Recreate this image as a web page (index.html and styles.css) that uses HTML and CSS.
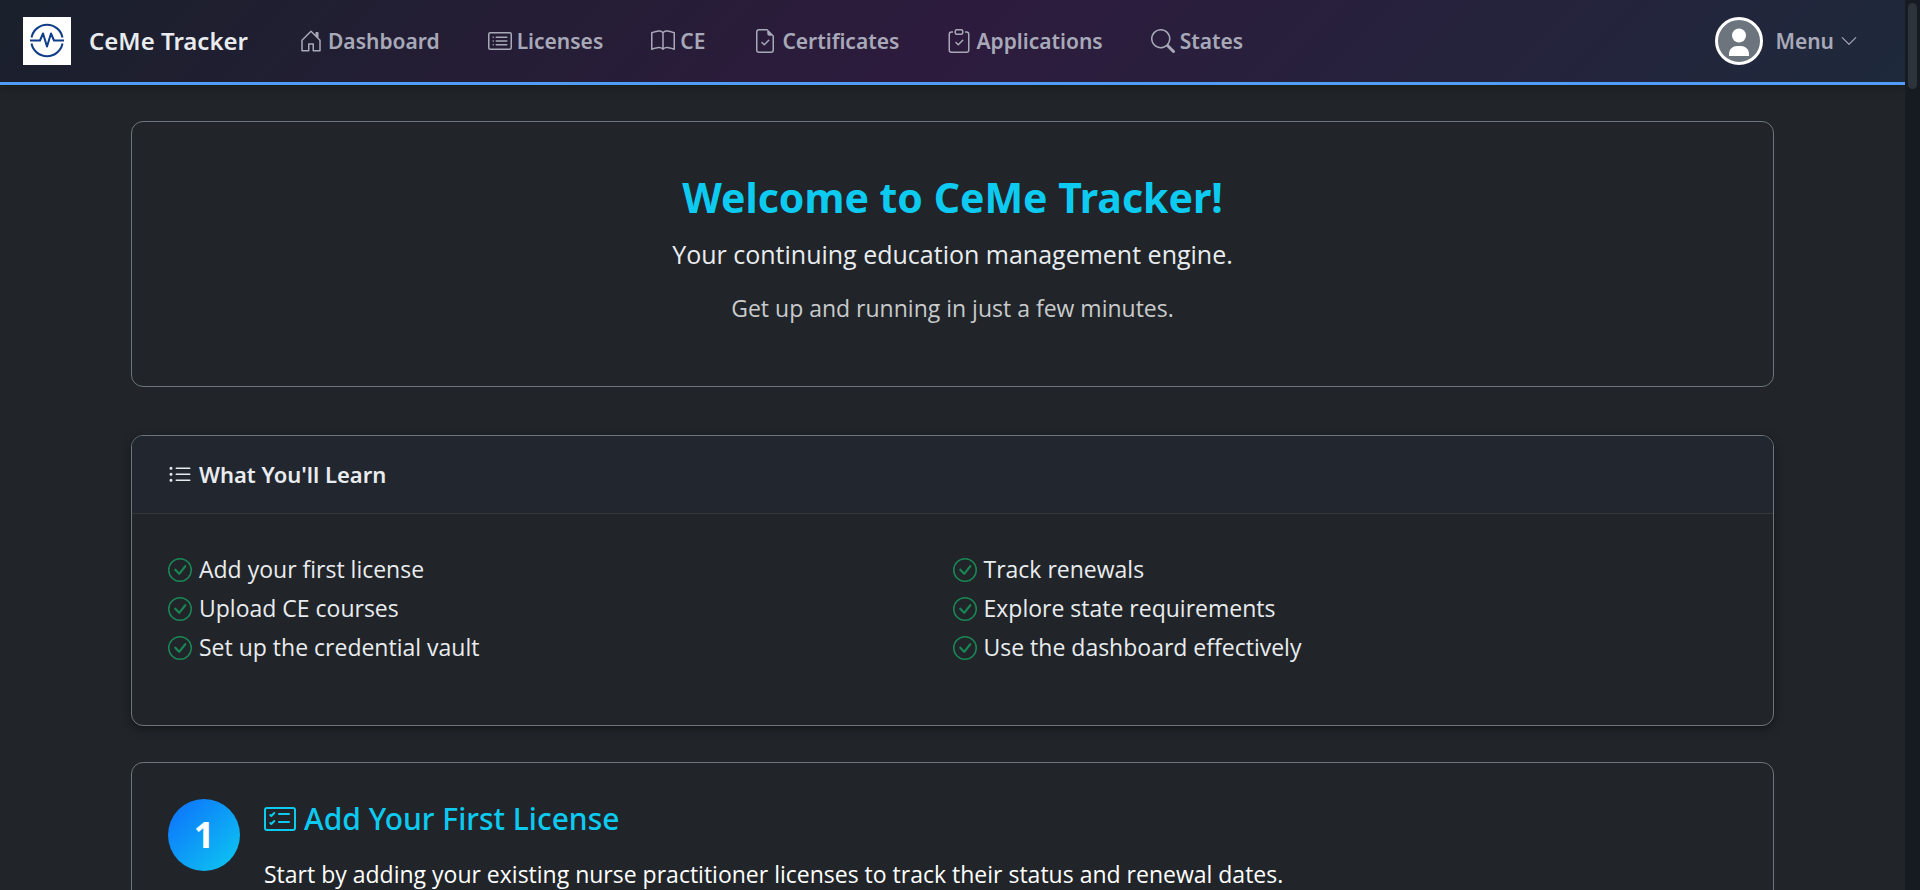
FILE: index.html
```html
<!DOCTYPE html>
<html lang="en">
<head>
    <meta charset="UTF-8">
    <meta name="viewport" content="width=device-width, initial-scale=1.0">
    <title>CeMe Tracker</title>
    <link rel="stylesheet" href="styles.css">
</head>
<body>
    <!-- Shared icons -->
    <svg class="icon-defs" aria-hidden="true">
        <symbol id="check-circle" viewBox="0 0 16 16">
            <path d="M8 15A7 7 0 1 1 8 1a7 7 0 0 1 0 14m0 1A8 8 0 1 0 8 0a8 8 0 0 0 0 16"/>
            <path d="m10.97 4.97-.02.022-3.473 4.425-2.093-2.094a.75.75 0 0 0-1.06 1.06L6.97 11.03a.75.75 0 0 0 1.079-.02l3.992-4.99a.75.75 0 0 0-1.071-1.05"/>
        </symbol>
    </svg>

    <div class="page">
        <header class="navbar">
            <a class="brand" href="#">
                <svg class="brand-logo" viewBox="0 0 48 48" aria-hidden="true">
                    <rect width="48" height="48" fill="#fff"/>
                    <g fill="none" stroke="#0f3d87" stroke-width="2">
                        <path d="M8.500 20.500a15.800 15.800 0 0 1 31 0M8.500 26.500a15.800 15.800 0 0 0 31 0"/>
                        <path d="M7 23.500h10l3-7 4 13 4-13 3 7h10" stroke-linejoin="round"/>
                    </g>
                </svg>
                <span>CeMe Tracker</span>
            </a>
            <nav class="nav-links">
                <a class="nav-link" href="#">
                    <svg class="icon" viewBox="0 0 16 16"><path d="M8.354 1.146a.5.5 0 0 0-.708 0l-6 6A.5.5 0 0 0 1.5 7.5v7a.5.5 0 0 0 .5.5h4.500a.5.5 0 0 0 .5-.5v-4h2v4a.5.5 0 0 0 .5.5H14a.5.5 0 0 0 .5-.5v-7a.5.5 0 0 0-.146-.354L13 5.793V2.500a.5.5 0 0 0-.5-.5h-1a.5.5 0 0 0-.5.5v1.293zM2.500 14V7.707l5.500-5.500 5.500 5.500V14H10v-4a.5.5 0 0 0-.5-.5h-3a.5.5 0 0 0-.5.5v4z"/></svg>
                    <span>Dashboard</span>
                </a>
                <a class="nav-link" href="#">
                    <svg class="icon" viewBox="0 0 16 16"><path d="M14.5 3a.5.5 0 0 1 .5.5v9a.5.5 0 0 1-.5.5h-13a.5.5 0 0 1-.5-.5v-9a.5.5 0 0 1 .5-.5zm-13-1A1.5 1.5 0 0 0 0 3.500v9A1.500 1.500 0 0 0 1.500 14h13a1.500 1.500 0 0 0 1.500-1.500v-9A1.500 1.500 0 0 0 14.500 2z"/><path d="M5 8a.5.5 0 0 1 .5-.5h7a.5.5 0 0 1 0 1h-7A.5.5 0 0 1 5 8m0-2.500a.5.5 0 0 1 .5-.5h7a.5.5 0 0 1 0 1h-7a.5.5 0 0 1-.5-.5m0 5a.5.5 0 0 1 .5-.5h7a.5.5 0 0 1 0 1h-7a.5.5 0 0 1-.5-.5m-1-5a.5.5 0 1 1-1 0 .5.5 0 0 1 1 0M4 8a.5.5 0 1 1-1 0 .5.5 0 0 1 1 0m0 2.500a.5.5 0 1 1-1 0 .5.5 0 0 1 1 0"/></svg>
                    <span>Licenses</span>
                </a>
                <a class="nav-link" href="#">
                    <svg class="icon" viewBox="0 0 16 16"><path d="M1 2.828c.885-.37 2.154-.769 3.388-.893 1.330-.134 2.458.063 3.112.752v9.746c-.935-.53-2.120-.603-3.213-.493-1.180.12-2.370.461-3.287.811zm7.500-.141c.654-.689 1.782-.886 3.112-.752 1.234.124 2.503.523 3.388.893v9.923c-.918-.35-2.107-.692-3.287-.81-1.094-.111-2.278-.039-3.213.492zM8 1.783C7.015.936 5.587.81 4.287.94c-1.514.153-3.042.672-3.994 1.105A.5.5 0 0 0 0 2.500v11a.5.5 0 0 0 .707.455c.882-.4 2.303-.881 3.680-1.020 1.409-.142 2.590.087 3.223.877a.5.5 0 0 0 .78 0c.633-.79 1.814-1.019 3.222-.877 1.378.139 2.800.62 3.681 1.020A.5.5 0 0 0 16 13.500v-11a.5.5 0 0 0-.293-.455c-.952-.433-2.480-.952-3.994-1.105C10.413.809 8.985.936 8 1.783"/></svg>
                    <span>CE</span>
                </a>
                <a class="nav-link" href="#">
                    <svg class="icon" viewBox="0 0 16 16"><path d="M10.854 7.854a.5.5 0 0 0-.708-.708L7.500 9.793 6.354 8.646a.5.5 0 1 0-.708.708l1.500 1.500a.5.5 0 0 0 .708 0z"/><path d="M14 14V4.500L9.500 0H4a2 2 0 0 0-2 2v12a2 2 0 0 0 2 2h8a2 2 0 0 0 2-2M9.500 3A1.500 1.500 0 0 0 11 4.500h2V14a1 1 0 0 1-1 1H4a1 1 0 0 1-1-1V2a1 1 0 0 1 1-1h5.500z"/></svg>
                    <span>Certificates</span>
                </a>
                <a class="nav-link" href="#">
                    <svg class="icon" viewBox="0 0 16 16"><path d="M10.854 7.146a.5.5 0 0 1 0 .708l-3 3a.5.5 0 0 1-.708 0l-1.500-1.500a.5.5 0 1 1 .708-.708L7.500 9.793l2.646-2.647a.5.5 0 0 1 .708 0"/><path d="M4 1.500H3a2 2 0 0 0-2 2V14a2 2 0 0 0 2 2h10a2 2 0 0 0 2-2V3.500a2 2 0 0 0-2-2h-1v1h1a1 1 0 0 1 1 1V14a1 1 0 0 1-1 1H3a1 1 0 0 1-1-1V3.500a1 1 0 0 1 1-1h1z"/><path d="M9.500 1a.5.5 0 0 1 .5.5v1a.5.5 0 0 1-.5.5h-3a.5.5 0 0 1-.5-.5v-1a.5.5 0 0 1 .5-.5zm-3-1A1.500 1.500 0 0 0 5 1.500v1A1.500 1.500 0 0 0 6.500 4h3A1.500 1.500 0 0 0 11 2.500v-1A1.500 1.500 0 0 0 9.500 0z"/></svg>
                    <span>Applications</span>
                </a>
                <a class="nav-link" href="#">
                    <svg class="icon" viewBox="0 0 16 16"><path d="M11.742 10.344a6.500 6.500 0 1 0-1.397 1.398h-.001q.044.06.098.115l3.850 3.850a1 1 0 0 0 1.415-1.414l-3.850-3.850a1 1 0 0 0-.115-.1zM12 6.500a5.500 5.500 0 1 1-11 0 5.500 5.500 0 0 1 11 0"/></svg>
                    <span>States</span>
                </a>
            </nav>
            <button class="menu-button" type="button">
                <svg class="avatar" viewBox="0 0 48 48" aria-hidden="true">
                    <circle cx="24" cy="24" r="22.500" fill="#6c757d" stroke="#fff" stroke-width="3"/>
                    <circle cx="24" cy="18.500" r="7" fill="#fff"/>
                    <path d="M14 39v-2c0-5 4-8 8-8h4c4 0 8 3 8 8v2z" fill="#fff"/>
                </svg>
                <span>Menu</span>
                <svg class="chevron" viewBox="0 0 16 16" aria-hidden="true"><path d="M1.646 4.646a.5.5 0 0 1 .708 0L8 10.293l5.646-5.647a.5.5 0 0 1 .708.708l-6 6a.5.5 0 0 1-.708 0l-6-6a.5.5 0 0 1 0-.708"/></svg>
            </button>
        </header>

        <main class="container">
            <section class="card welcome">
                <h1>Welcome to CeMe Tracker!</h1>
                <p class="lead">Your continuing education management engine.</p>
                <p class="hint">Get up and running in just a few minutes.</p>
            </section>

            <section class="card learn">
                <h2 class="card-header">
                    <svg class="icon" viewBox="0 0 16 16"><path d="M5 11.500a.5.5 0 0 1 .5-.5h9a.5.5 0 0 1 0 1h-9a.5.5 0 0 1-.5-.5m0-4a.5.5 0 0 1 .5-.5h9a.5.5 0 0 1 0 1h-9a.5.5 0 0 1-.5-.5m0-4a.5.5 0 0 1 .5-.5h9a.5.5 0 0 1 0 1h-9a.5.5 0 0 1-.5-.5m-3 1a1 1 0 1 0 0-2 1 1 0 0 0 0 2m0 4a1 1 0 1 0 0-2 1 1 0 0 0 0 2m0 4a1 1 0 1 0 0-2 1 1 0 0 0 0 2"/></svg>
                    <span>What You'll Learn</span>
                </h2>
                <div class="learn-body">
                    <ul class="check-list">
                        <li><svg class="icon"><use href="#check-circle"/></svg>Add your first license</li>
                        <li><svg class="icon"><use href="#check-circle"/></svg>Upload CE courses</li>
                        <li><svg class="icon"><use href="#check-circle"/></svg>Set up the credential vault</li>
                    </ul>
                    <ul class="check-list">
                        <li><svg class="icon"><use href="#check-circle"/></svg>Track renewals</li>
                        <li><svg class="icon"><use href="#check-circle"/></svg>Explore state requirements</li>
                        <li><svg class="icon"><use href="#check-circle"/></svg>Use the dashboard effectively</li>
                    </ul>
                </div>
            </section>

            <section class="card step">
                <div class="step-number">1</div>
                <div class="step-content">
                    <h3>
                        <svg class="step-icon" viewBox="0 0 16 16"><path d="M14.500 3a.5.5 0 0 1 .5.5v9a.5.5 0 0 1-.5.5h-13a.5.5 0 0 1-.5-.5v-9a.5.5 0 0 1 .5-.5zm-13-1A1.500 1.500 0 0 0 0 3.500v9A1.500 1.500 0 0 0 1.500 14h13a1.500 1.500 0 0 0 1.500-1.500v-9A1.500 1.500 0 0 0 14.500 2z"/><path d="M7 5.500a.5.5 0 0 1 .5-.5h5a.5.5 0 0 1 0 1h-5a.5.5 0 0 1-.5-.5m-1.496-.854a.5.5 0 0 1 0 .708l-1.500 1.500a.5.5 0 0 1-.708 0l-.5-.5a.5.5 0 1 1 .708-.708l.146.147 1.146-1.147a.5.5 0 0 1 .708 0M7 9.500a.5.5 0 0 1 .5-.5h5a.5.5 0 0 1 0 1h-5a.5.5 0 0 1-.5-.5m-1.496-.854a.5.5 0 0 1 0 .708l-1.500 1.500a.5.5 0 0 1-.708 0l-.5-.5a.5.5 0 0 1 .708-.708l.146.147 1.146-1.147a.5.5 0 0 1 .708 0"/></svg>
                        <span>Add Your First License</span>
                    </h3>
                    <p>Start by adding your existing nurse practitioner licenses to track their status and renewal dates.</p>
                </div>
            </section>
        </main>
    </div>

    <div class="scroll-track"><div class="scroll-thumb"></div></div>
</body>
</html>
```
FILE: styles.css
```css
* {
    box-sizing: border-box;
}

body {
    display: flex;
    height: 100vh;
    margin: 0;
    overflow: hidden;
    background-color: #212529;
    color: #e9ecef;
    font-family: "Open Sans", "Noto Sans", sans-serif;
    font-size: 23px;
    line-height: 36px;
}

h1, h2, h3, p, ul {
    margin: 0;
    padding: 0;
}

h1, h2, h3,
.navbar,
.step-number {
    font-family: "Noto Sans", "Open Sans", sans-serif;
}

svg {
    fill: currentColor;
    flex-shrink: 0;
}

.icon-defs {
    display: none;
}

.icon {
    width: 24px;
    height: 24px;
}

/* Page and scrollbar */
.page {
    flex: 1;
    min-width: 0;
    overflow: hidden;
}

.scroll-track {
    width: 15px;
    padding: 3px;
    background-color: #161b22;
}

.scroll-thumb {
    width: 9px;
    height: 86px;
    border-radius: 5px;
    background-color: #2d333b;
}

/* Navbar */
.navbar {
    display: flex;
    align-items: center;
    height: 85px;
    padding: 0 47px 0 23px;
    border-bottom: 3px solid #4f9cf9;
    background: linear-gradient(135deg, #1a202c 0%, #2d1b3d 50%, #1e293b 100%);
    box-shadow: 0 2px 10px rgba(0, 0, 0, 0.3);
}

.brand {
    display: flex;
    align-items: center;
    gap: 18px;
    margin-right: 51px;
    color: #e9ecef;
    font-size: 24px;
    font-weight: 600;
    text-decoration: none;
}

.brand-logo,
.avatar {
    width: 48px;
    height: 48px;
}

.nav-links {
    display: flex;
    gap: 48px;
    flex: 1;
}

.nav-link,
.menu-button {
    display: flex;
    align-items: center;
    gap: 5px;
    color: #a8a9b8;
    font-size: 21px;
    font-weight: 600;
    text-decoration: none;
}

.menu-button {
    gap: 12px;
    padding: 0;
    border: none;
    background: none;
    font-family: inherit;
    cursor: pointer;
}

.chevron {
    width: 18px;
    height: 18px;
    margin-left: -6px;
}

/* Cards */
.container {
    max-width: 1679px;
    margin: 0 auto;
    padding: 36px 18px;
}

.card {
    border: 1px solid #6c757d;
    border-radius: 12px;
}

.welcome {
    margin-bottom: 48px;
    padding: 48px 36px 60px;
    text-align: center;
}

.welcome h1 {
    margin-bottom: 12px;
    color: #0dcaf0;
    font-size: 41px;
    font-weight: 700;
    line-height: 54px;
}

.lead {
    margin-bottom: 18px;
    font-size: 25px;
}

.hint {
    color: #c8cacc;
}

.learn {
    margin-bottom: 36px;
    overflow: hidden;
    box-shadow: 0 3px 10px rgba(0, 0, 0, 0.4);
}

.card-header {
    display: flex;
    align-items: center;
    gap: 7px;
    padding: 21px 36px;
    border-bottom: 1px solid #33373c;
    background-color: #22262f;
    font-size: 22px;
    font-weight: 600;
    line-height: 35px;
}

.learn-body {
    display: flex;
    padding: 36px 36px 58px;
}

.check-list {
    flex: 1;
    list-style: none;
}

.check-list li {
    display: flex;
    align-items: center;
    gap: 7px;
    line-height: 39px;
}

.check-list .icon {
    color: #198754;
}

.step {
    display: flex;
    gap: 24px;
    padding: 36px;
    color: #fff;
}

.step-number {
    display: flex;
    align-items: center;
    justify-content: center;
    flex-shrink: 0;
    width: 72px;
    height: 72px;
    border-radius: 50%;
    background: linear-gradient(135deg, #0d6efd, #0dcaf0);
    font-size: 36px;
    font-weight: 700;
}

.step h3 {
    display: flex;
    align-items: center;
    gap: 8px;
    margin-bottom: 17px;
    color: #0dcaf0;
    font-size: 30px;
    font-weight: 500;
    line-height: 40px;
}

.step-icon {
    width: 32px;
    height: 32px;
}
```
